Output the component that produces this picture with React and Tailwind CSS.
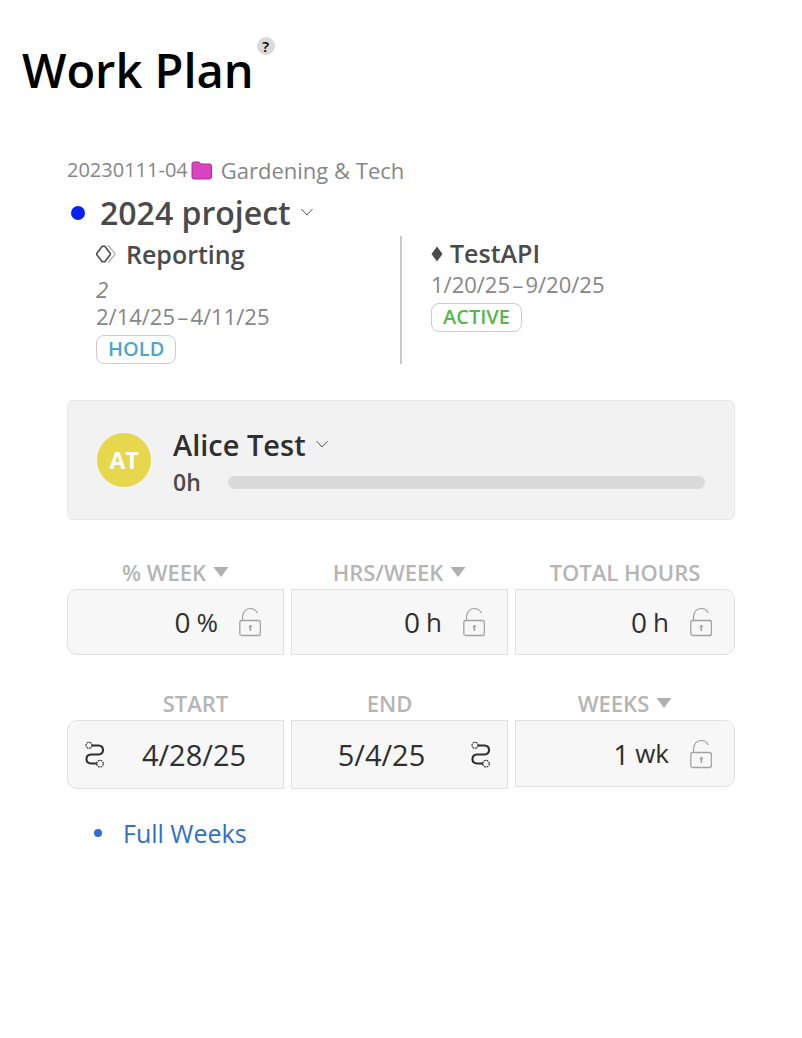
import React, { useState } from 'react';

const ChevronIcon = () => (
  <svg width="14" height="10" viewBox="0 0 14 10" fill="none" stroke="#555" strokeWidth="1" aria-hidden="true">
    <path d="M1.5 1 L7 7 L12.5 1" />
  </svg>
);

const FolderIcon = () => (
  <svg width="22" height="20" viewBox="0 0 22 20" fill="#da43bf" stroke="#ab2c93" strokeWidth="1" aria-hidden="true">
    <path d="M1 4 Q1 2 3 2 H7.5 Q8.6 2 9.3 3 L10 4 H18.5 Q20.5 4 20.5 6 V17 Q20.5 19 18.5 19 H3 Q1 19 1 17 Z" />
  </svg>
);

const PhaseIcon = () => (
  <svg width="20" height="18" viewBox="0 0 20 18" fill="none" aria-hidden="true">
    <path d="M11.5 1.2 H12.8 L18.6 8.2 Q19.2 9 18.6 9.8 L12.8 16.8 H11.5" stroke="#aaa" strokeWidth="1.2" />
    <path d="M6.2 1.3 H8.8 L14.2 8.2 Q14.8 9 14.2 9.8 L8.8 16.7 H6.2 L0.9 9.8 Q0.3 9 0.9 8.2 Z" stroke="#484848" strokeWidth="1.5" />
  </svg>
);

const DiamondIcon = () => (
  <svg width="12" height="16" viewBox="0 0 12 16" fill="#4a4a4a" aria-hidden="true">
    <path d="M6 0.5 L11.5 8 L6 15.5 L0.5 8 Z" />
  </svg>
);

const UnlockIcon = () => (
  <svg width="22" height="30" viewBox="0 0 22 30" fill="none" stroke="#a3a3a3" aria-hidden="true">
    <rect x="0.8" y="13.5" width="20.6" height="15" rx="2" strokeWidth="1.3" />
    <path d="M3.5 13 V9.5 Q4.5 1.6 11.5 1.5 Q16 1.6 18.5 6" strokeWidth="1.2" />
    <path d="M11.3 18 V24" strokeWidth="1.6" />
    <path d="M9 20.2 L11.3 18.4 H12.8 V20.2 Z" fill="#a3a3a3" stroke="none" />
  </svg>
);

const RouteIcon = () => (
  <svg width="20" height="28" viewBox="0 0 20 28" fill="none" stroke="#2f2f2f" aria-hidden="true">
    <path d="M7 4.5 H13.5 Q18 4.7 18 9 Q18 13.2 13.5 13.5 H6 Q1.5 13.7 1.5 18 Q1.5 22.3 6 22.5 H12" strokeWidth="2.1" />
    <circle cx="4" cy="4.3" r="3" strokeWidth="1.1" strokeDasharray="2.2 0.6" />
    <circle cx="15" cy="22.7" r="3.3" strokeWidth="1.2" strokeDasharray="1.8 0.8" />
  </svg>
);

const FieldLabel = ({ htmlFor, children, onToggle }) => (
  <div className="flex items-center justify-center gap-[7px] text-[22px] leading-[30px] font-semibold text-[#b5b5b5]">
    <label htmlFor={htmlFor}>{children}</label>
    {onToggle && (
      <button type="button" aria-label={`${children} options`} onClick={onToggle}>
        <svg width="16" height="10" viewBox="0 0 16 10" fill="#b0b0b0" aria-hidden="true">
          <path d="M0.5 0 H15.5 L8 10 Z" />
        </svg>
      </button>
    )}
  </div>
);

const boxClasses = 'flex items-center border border-[#e1e1e1] bg-[#f7f7f7] text-[#2f2f2f]';

const AmountField = ({ id, value, unit, onChange, className }) => (
  <div className={`${boxClasses} text-[28px] ${className}`}>
    <input
      id={id}
      type="text"
      value={value}
      onChange={onChange}
      className="min-w-0 flex-1 bg-transparent text-right outline-none"
    />
    <span className="mr-[21px] ml-[6px] text-[26px]">{unit}</span>
    <button type="button" aria-label={`Lock ${id}`}>
      <UnlockIcon />
    </button>
  </div>
);

const Badge = ({ children, className }) => (
  <span className={`mt-[5px] block w-fit rounded-lg border border-[#ccc] px-[11px] pb-[2px] text-[20px] leading-[25px] font-semibold ${className}`}>
    {children}
  </span>
);

const App = () => {
  const [plan, setPlan] = useState({
    percent: '0',
    hours: '0',
    total: '0',
    start: '4/28/25',
    end: '5/4/25',
    weeks: '1'
  });
  const [openMenu, setOpenMenu] = useState(null);

  const handleChange = (field) => (e) => {
    setPlan(prev => ({ ...prev, [field]: e.target.value }));
  };

  const toggleMenu = (name) => () => {
    setOpenMenu(openMenu === name ? null : name);
  };

  return (
    <main className="bg-white pt-[37px] pb-12 font-['Open_Sans',sans-serif] text-[#2f2f2f]">
      <header className="flex items-start gap-[3px] px-[22px]">
        <h1 className="text-[47px] leading-[66px] font-semibold text-black">Work Plan</h1>
        <button
          type="button"
          aria-label="Help"
          className="h-[18px] w-[18px] rounded-full bg-[#d9d9d9] text-[15px] leading-[18px] font-semibold text-black"
        >
          ?
        </button>
      </header>

      <div className="px-[67px] pt-[52px]">
        {/* Project */}
        <section>
          <div className="flex items-center text-[22px] leading-[30px] text-[#868686]">
            <span className="mr-[3px] text-[20px]">20230111-04</span>
            <FolderIcon />
            <span className="ml-2">Gardening &amp; Tech</span>
          </div>
          <div className="mt-[6px] flex items-center">
            <span className="mx-1 h-[14px] w-[14px] rounded-full bg-[#0a20ee]" />
            <h2 className="ml-[11px] text-[32px] leading-[44px] font-semibold text-[#4a4a4a]">2024 project</h2>
            <button type="button" aria-label="Choose project" className="ml-[9px]" onClick={toggleMenu('project')}>
              <ChevronIcon />
            </button>
          </div>

          <div className="mt-px grid grid-cols-2 text-[22px] leading-[27px] text-[#868686]">
            <div className="pl-[29px]">
              <h3 className="mb-1 flex items-center gap-[10px] text-[25px] leading-9 font-semibold text-[#4a4a4a]">
                <PhaseIcon />
                Reporting
              </h3>
              <p className="italic">2</p>
              <p>2/14/25&#8202;–&#8202;4/11/25</p>
              <Badge className="text-[#4ba6c9]">HOLD</Badge>
            </div>
            <div className="-ml-px border-l-2 border-[#c8c8c8] pl-[29px]">
              <h3 className="flex items-center gap-[7px] text-[25px] leading-[35px] font-semibold text-[#4a4a4a]">
                <DiamondIcon />
                TestAPI
              </h3>
              <p>1/20/25&#8202;–&#8202;9/20/25</p>
              <Badge className="text-[#55b74c]">ACTIVE</Badge>
            </div>
          </div>
        </section>

        {/* Person */}
        <section className="mt-9 flex items-center rounded-md border border-[#e8e8e8] bg-[#f2f2f2] px-[29px] py-[22px]">
          <div className="flex h-[54px] w-[54px] items-center justify-center rounded-full bg-[#e7d74c] text-[23px] leading-[54px] font-bold text-white">
            AT
          </div>
          <div className="ml-[22px] flex-1">
            <div className="flex items-center">
              <h2 className="text-[29px] leading-[44px] font-semibold">Alice Test</h2>
              <button type="button" aria-label="Choose person" className="ml-[9px]" onClick={toggleMenu('person')}>
                <ChevronIcon />
              </button>
            </div>
            <div className="flex items-center">
              <span className="w-[55px] text-[23px] leading-[30px] font-semibold text-[#4a4a4a]">0h</span>
              <div className="h-[13px] flex-1 rounded-full bg-[#dadada]" />
            </div>
          </div>
        </section>

        {/* Effort */}
        <section className="mt-[37px] grid grid-cols-[1fr_1fr_220px] gap-[7px]">
          <div className="min-w-0">
            <FieldLabel htmlFor="percent" onToggle={toggleMenu('percent')}>% WEEK</FieldLabel>
            <AmountField
              id="percent"
              value={plan.percent}
              unit="%"
              onChange={handleChange('percent')}
              className="mt-[2px] h-[66px] rounded-l-[10px] pr-[22px]"
            />
          </div>
          <div className="min-w-0">
            <FieldLabel htmlFor="hours" onToggle={toggleMenu('hours')}>HRS/WEEK</FieldLabel>
            <AmountField
              id="hours"
              value={plan.hours}
              unit="h"
              onChange={handleChange('hours')}
              className="mt-[2px] h-[66px] pr-[22px]"
            />
          </div>
          <div className="min-w-0">
            <FieldLabel htmlFor="total">TOTAL HOURS</FieldLabel>
            <AmountField
              id="total"
              value={plan.total}
              unit="h"
              onChange={handleChange('total')}
              className="mt-[2px] h-[66px] rounded-r-[10px] pr-[22px]"
            />
          </div>
        </section>

        {/* Dates */}
        <section className="mt-[33px] grid grid-cols-[1fr_1fr_220px] gap-[7px]">
          <div className="min-w-0">
            <div className="pl-10">
              <FieldLabel htmlFor="start">START</FieldLabel>
            </div>
            <div className={`${boxClasses} mt-[2px] h-[69px] rounded-l-[10px] pl-[17px] text-[29px]`}>
              <button type="button" aria-label="Start milestone">
                <RouteIcon />
              </button>
              <input
                id="start"
                type="text"
                value={plan.start}
                onChange={handleChange('start')}
                className="min-w-0 flex-1 bg-transparent text-center outline-none"
              />
            </div>
          </div>
          <div className="min-w-0">
            <div className="pr-5">
              <FieldLabel htmlFor="end">END</FieldLabel>
            </div>
            <div className={`${boxClasses} mt-[2px] h-[69px] pr-[16px] text-[29px]`}>
              <input
                id="end"
                type="text"
                value={plan.end}
                onChange={handleChange('end')}
                className="min-w-0 flex-1 bg-transparent text-center outline-none"
              />
              <button type="button" aria-label="End milestone">
                <RouteIcon />
              </button>
            </div>
          </div>
          <div className="min-w-0">
            <FieldLabel htmlFor="weeks" onToggle={toggleMenu('weeks')}>WEEKS</FieldLabel>
            <AmountField
              id="weeks"
              value={plan.weeks}
              unit="wk"
              onChange={handleChange('weeks')}
              className="mt-[2px] h-[67px] rounded-r-[10px] pr-[22px]"
            />
          </div>
        </section>

        <ul className="mt-[26px] pl-[27px] text-[25px] leading-9 text-[#2f6fd0]">
          <li className="flex items-center gap-[21px]">
            <span className="h-2 w-2 rounded-full bg-[#2f6fd0]" />
            <a href="#full-weeks">Full Weeks</a>
          </li>
        </ul>
      </div>
    </main>
  );
};

export default App;
